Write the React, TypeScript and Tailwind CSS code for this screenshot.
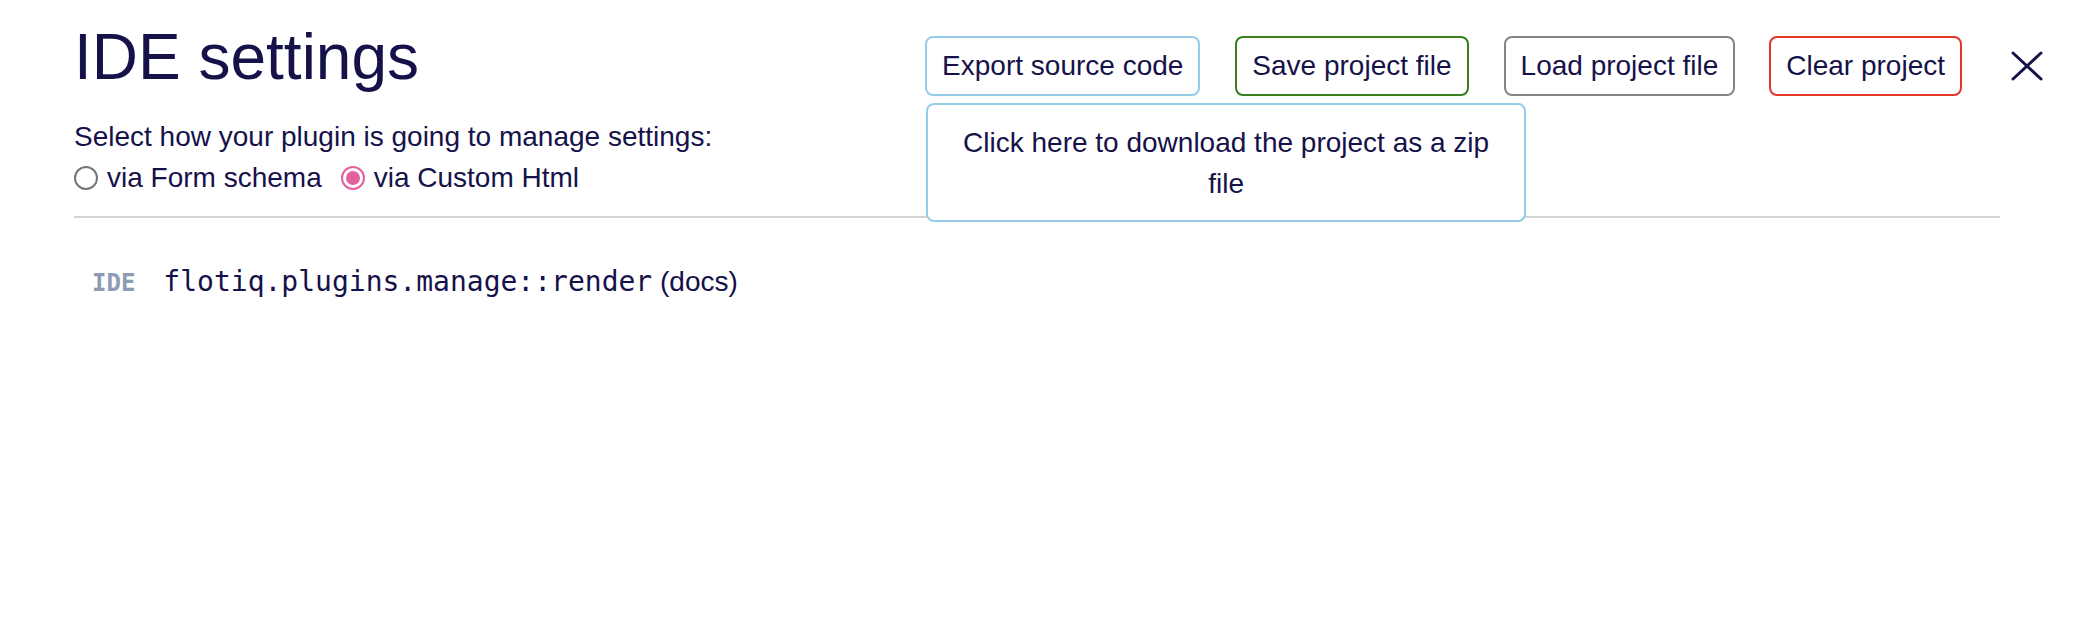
import React from "react";

const sans = { fontFamily: '"Liberation Sans", Arial, sans-serif' };

export default function App() {
  return (
    <div
      className="w-[2080px] h-[630px] bg-white text-[#15124a] pl-[74px] pr-[37px] pt-[25px]"
      style={sans}
    >
      <div className="flex items-start justify-between">
        <h1 className="text-[64px] leading-none font-normal m-0">IDE settings</h1>
        <div className="relative mt-[11px] flex items-center">
          <button className="h-[60px] px-[15px] border-2 border-[#94cde9] rounded-lg bg-white text-[28px] leading-none text-[#15124a]">
            Export source code
          </button>
          <button className="ml-[35px] h-[60px] px-[15px] border-2 border-[#3b7d22] rounded-lg bg-white text-[28px] leading-none text-[#15124a]">
            Save project file
          </button>
          <button className="ml-[35px] h-[60px] px-[15px] border-2 border-[#858585] rounded-lg bg-white text-[28px] leading-none text-[#15124a]">
            Load project file
          </button>
          <button className="ml-[34px] h-[60px] px-[15px] border-2 border-[#e3372a] rounded-lg bg-white text-[28px] leading-none text-[#15124a]">
            Clear project
          </button>
          <button className="ml-[49px] w-[32px] h-[32px] flex items-center justify-center">
            <svg width="32" height="32" viewBox="0 0 32 32" fill="none">
              <path
                d="M2 3 L30 29 M30 3 L2 29"
                stroke="#15124a"
                strokeWidth="3"
                strokeLinecap="round"
              />
            </svg>
          </button>
          <div className="absolute left-[1px] top-[67px] w-[600px] h-[119px] border-2 border-[#94cde9] rounded-lg bg-white px-[28px] flex items-center justify-center text-center text-[28px] leading-[41px]">
            Click here to download the project as a zip file
          </div>
        </div>
      </div>

      <div className="pr-[43px]">
        <div className="mt-[21px] text-[28px] leading-[40px]">
          Select how your plugin is going to manage settings:
        </div>
        <div className="mt-[1px] flex items-center h-[40px] text-[28px] leading-[40px]">
          <span className="w-[24px] h-[24px] rounded-full border-2 border-[#767676] bg-white" />
          <span className="ml-[9px]">via Form schema</span>
          <span className="ml-[19px] w-[24px] h-[24px] rounded-full border-2 border-[#e2609e] bg-white flex items-center justify-center">
            <span className="w-[14px] h-[14px] rounded-full bg-[#e2609e]" />
          </span>
          <span className="ml-[9px]">via Custom Html</span>
        </div>
        <div className="mt-[18px] h-[2px] bg-[#d3d3d3]" />
        <div className="mt-[44px] pl-[18px] flex items-baseline leading-[40px]">
          <span
            className="text-[24px] font-bold text-[#8d9bb5]"
            style={{ fontFamily: '"DejaVu Sans Mono", monospace' }}
          >
            IDE
          </span>
          <span
            className="ml-[28px] text-[28px]"
            style={{ fontFamily: '"DejaVu Sans Mono", monospace' }}
          >
            flotiq.plugins.manage::render
          </span>
          <span className="text-[28px] whitespace-pre"> (docs)</span>
        </div>
      </div>
    </div>
  );
}
